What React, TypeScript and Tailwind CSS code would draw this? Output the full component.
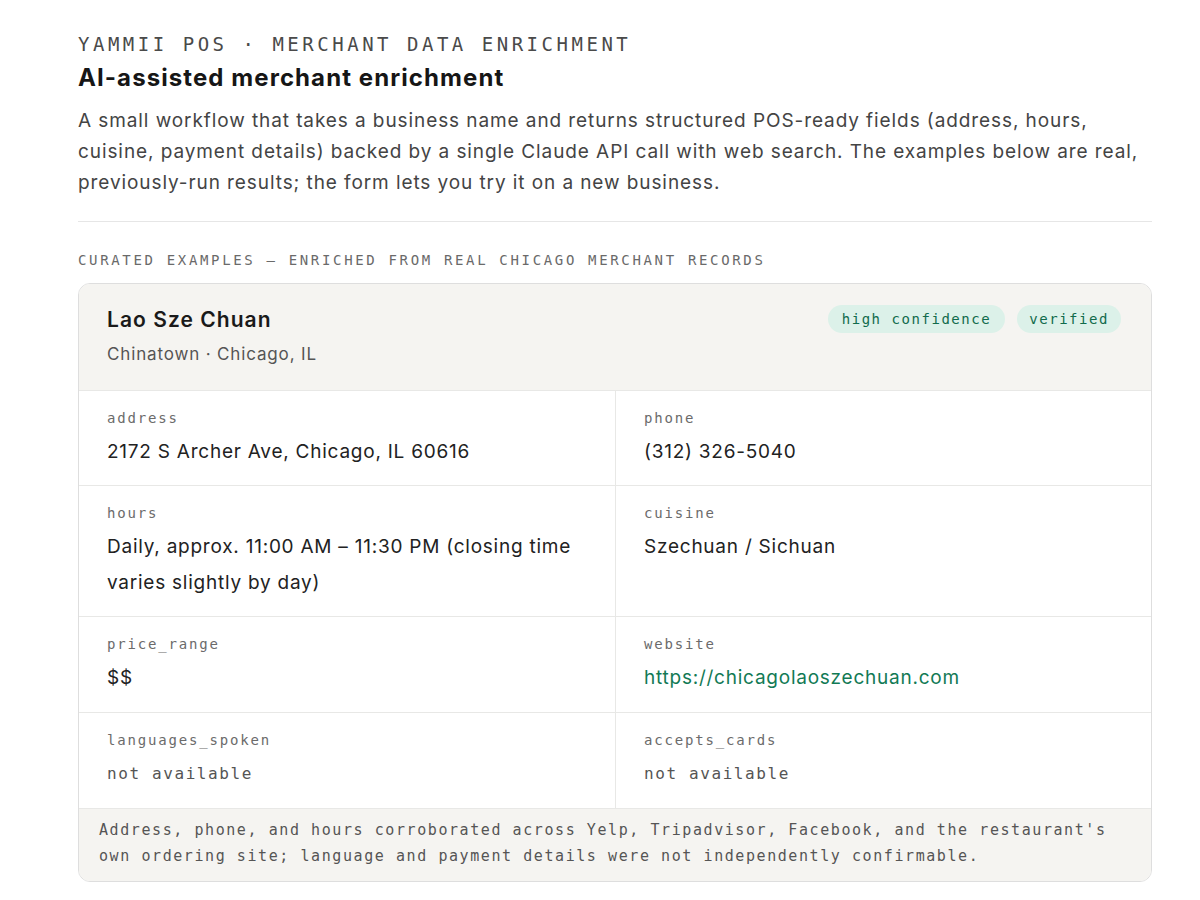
const MONO = "font-['DejaVu_Sans_Mono',monospace]";

const FIELDS = [
  { label: "address", value: "2172 S Archer Ave, Chicago, IL 60616" },
  { label: "phone", value: "(312) 326-5040" },
  { label: "hours", value: "Daily, approx. 11:00 AM – 11:30 PM (closing time varies slightly by day)" },
  { label: "cuisine", value: "Szechuan / Sichuan" },
  { label: "price_range", value: "$$" },
  { label: "website", value: "https://chicagolaoszechuan.com", link: true },
  { label: "languages_spoken", value: "not available", missing: true },
  { label: "accepts_cards", value: "not available", missing: true },
];

function Field({ f, i }: { f: (typeof FIELDS)[number]; i: number }) {
  const right = i % 2 === 1;
  const pad = i < 4 ? "pb-[15px]" : "pb-4";
  return (
    <div className={`border-t border-[#e8e8e6] px-7 pt-[18px] ${pad} ${right ? "border-l" : ""}`}>
      <p className={`${MONO} text-[14px] leading-[18px] tracking-[0.13em] text-[#6b6b6b]`}>{f.label}</p>
      {f.missing ? (
        <p className={`${MONO} mt-[7px] text-[16px] leading-[36px] tracking-[0.1em] text-[#555]`}>{f.value}</p>
      ) : f.link ? (
        <a href={f.value} className="mt-[7px] block text-[19px] leading-[36px] tracking-[0.04em] text-[#127a55]">
          {f.value}
        </a>
      ) : (
        <p className="mt-[7px] text-[19px] leading-[36px] tracking-[0.04em] text-[#222]">{f.value}</p>
      )}
    </div>
  );
}

export default function App() {
  return (
    <div className="min-h-[900px] bg-white font-['Inter',sans-serif]">
      <div className="ml-[78px] w-[1074px] pt-8">
        <p className={`${MONO} text-[19px] leading-6 tracking-[0.185em] text-[#4a4a4a]`}>
          YAMMII POS · MERCHANT DATA ENRICHMENT
        </p>
        <h1 className="mt-[7px] text-[24px] font-bold leading-[30px] tracking-[0.045em] text-[#161616]">
          AI-assisted merchant enrichment
        </h1>
        <p className="mt-3 text-[19px] leading-[31px] tracking-[0.048em] text-[#444]">
          A small workflow that takes a business name and returns structured POS-ready fields (address, hours,
          cuisine, payment details) backed by a single Claude API call with web search. The examples below are real,
          previously-run results; the form lets you try it on a new business.
        </p>

        <div className="mt-[23px] border-t border-[#e6e6e6]" />

        <p className={`${MONO} mt-7 text-[14px] leading-5 tracking-[0.19em] text-[#6a6a6a]`}>
          CURATED EXAMPLES — ENRICHED FROM REAL CHICAGO MERCHANT RECORDS
        </p>

        <div className="mt-[13px] overflow-hidden rounded-xl border border-[#dedede]">
          <div className="flex items-start justify-between bg-[#f5f4f1] px-7 pt-[22px] pb-6">
            <div>
              <h2 className="text-[21px] font-semibold leading-7 tracking-[0.05em] text-[#1a1a1a]">Lao Sze Chuan</h2>
              <p className="mt-2 text-[17px] leading-6 tracking-[0.05em] text-[#555]">Chinatown · Chicago, IL</p>
            </div>
            <div className="mt-[-1px] mr-[2px] flex gap-3">
              <span className={`${MONO} rounded-full bg-[#dcf1e9] px-[14px] text-[14px] leading-7 tracking-[0.11em] text-[#116b4c]`}>
                high confidence
              </span>
              <span className={`${MONO} rounded-full bg-[#dcf1e9] px-3 text-[14px] leading-7 tracking-[0.11em] text-[#116b4c]`}>
                verified
              </span>
            </div>
          </div>

          <div className="grid grid-cols-2">
            {FIELDS.map((f, i) => (
              <Field key={f.label} f={f} i={i} />
            ))}
          </div>

          <div className={`${MONO} border-t border-[#e8e8e6] bg-[#f5f4f1] px-5 pt-2 pb-3 text-[15px] leading-[26px] tracking-[0.105em] text-[#555]`}>
            Address, phone, and hours corroborated across Yelp, Tripadvisor, Facebook, and the restaurant's own ordering
            site; language and payment details were not independently confirmable.
          </div>
        </div>
      </div>
    </div>
  );
}
